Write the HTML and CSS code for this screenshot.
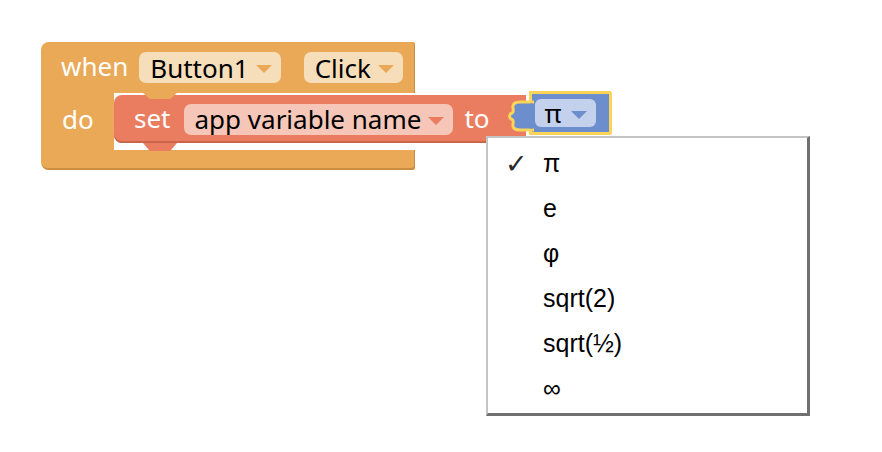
FILE: index.html
```html
<!DOCTYPE html>
<html lang="en">
<head>
  <meta charset="UTF-8">
  <title>Blocks</title>
  <link rel="stylesheet" href="styles.css">
</head>
<body>
  <div class="workspace">
    <div class="event-block">
      <div class="event-head">
        <span class="label">when</span>
        <span class="field field-orange first">Button1<i class="arrow"></i></span>
        <span class="field field-orange">Click<i class="arrow"></i></span>
      </div>
      <div class="event-body">
        <div class="do-col"><span class="label">do</span></div>
        <div class="slot">
          <div class="set-block">
            <span class="label">set</span>
            <span class="field field-salmon">app variable name<i class="arrow"></i></span>
            <span class="label to">to</span>
            <div class="math-block">
              <svg class="tab" width="26" height="36" viewBox="0 0 26 36">
                <path d="M26 4 H12 Q4 4 5 10 Q6 15 3 15.5 Q0 18 3 21 Q6 21.5 5 26 Q4 32 12 32 H26 Z" fill="#6c8ecc" stroke="#fcd45a" stroke-width="3"/>
                <rect x="22" y="5.5" width="6" height="25" fill="#6c8ecc"/>
              </svg>
              <span class="field field-blue">π<i class="arrow"></i></span>
            </div>
          </div>
        </div>
      </div>
      <div class="event-foot"></div>
    </div>

    <ul class="menu">
      <li class="menu-item"><span class="check">✓</span>π</li>
      <li class="menu-item"><span class="check"></span>e</li>
      <li class="menu-item"><span class="check"></span>φ</li>
      <li class="menu-item"><span class="check"></span>sqrt(2)</li>
      <li class="menu-item"><span class="check"></span>sqrt(½)</li>
      <li class="menu-item"><span class="check"></span>∞</li>
    </ul>
  </div>
</body>
</html>
```

FILE: styles.css
```css
body {
  margin: 0;
  background: #fff;
  font-family: "Noto Sans", sans-serif;
}

.workspace {
  position: relative;
  width: 882px;
  height: 452px;
  padding: 42px 0 0 41px;
  box-sizing: border-box;
}

.event-block {
  display: flex;
  flex-direction: column;
  width: 374px;
}

.label {
  color: #fff;
  font-size: 26px;
  line-height: 1;
  white-space: nowrap;
}

/* head row: when [Button1] [Click] */
.event-head {
  display: flex;
  align-items: center;
  height: 51px;
  padding-left: 20px;
  background: #e9a956;
  border-radius: 8px 3px 0 0;
  box-shadow: inset -1px 0 0 #c98e42;
}

.event-head .label {
  margin-top: -3px;
}

.field {
  display: inline-flex;
  flex-shrink: 0;
  align-items: center;
  height: 31px;
  padding: 0 9px 0 11px;
  border-radius: 7px;
  color: #000;
  font-size: 26px;
  line-height: 1;
  white-space: nowrap;
  box-sizing: border-box;
}

.field .arrow {
  width: 0;
  height: 0;
  margin: 3px 0 0 7px;
  border-left: 8.5px solid transparent;
  border-right: 8.5px solid transparent;
  border-top: 8px solid #e9a956;
}

.field-orange {
  background: #f7deba;
}

.field-orange.first {
  margin: 0 23px 0 11px;
}

.event-body {
  display: flex;
  height: 57px;
}

.do-col {
  flex-shrink: 0;
  width: 73px;
  padding: 13px 0 0 21px;
  background: #e9a956;
  box-sizing: border-box;
}

.slot {
  flex-shrink: 0;
  padding-top: 2px;
}

.event-foot {
  height: 20px;
  background: #e9a956;
  border-radius: 0 0 3px 8px;
  box-shadow: inset -1px -2px 0 #c98e42;
}

/* set [app variable name] to */
.set-block {
  position: relative;
  display: flex;
  align-items: center;
  height: 48px;
  padding-left: 20px;
  background: #ea7d60;
  border-radius: 8px 0 0 8px;
  box-shadow: inset 0 -2px 0 #cc6549;
  box-sizing: border-box;
}

.set-block::before {
  content: "";
  position: absolute;
  left: 29px;
  top: -2px;
  width: 34px;
  height: 6px;
  background: #e9a956;
  clip-path: polygon(0 0, 100% 0, 80% 100%, 20% 100%);
}

.set-block::after {
  content: "";
  position: absolute;
  left: 29px;
  bottom: -8px;
  width: 34px;
  height: 8px;
  background: #ea7d60;
  clip-path: polygon(0 0, 100% 0, 80% 100%, 20% 100%);
}

.set-block .label {
  margin-top: -3px;
}

.field-salmon {
  margin-left: 13px;
  background: #f6c7b8;
}

.field-salmon .arrow {
  border-top-color: #ea7d60;
}

.set-block .to {
  margin-left: 11px;
}

/* selected math constant block */
.math-block {
  position: relative;
  flex-shrink: 0;
  align-self: flex-start;
  display: flex;
  align-items: center;
  width: 82px;
  height: 44px;
  margin: -4px -86px 0 40px;
  padding-left: 5px;
  background: #6c8ecc;
  border: 3px solid #fcd45a;
  border-left-width: 0;
  border-radius: 0 3px 3px 0;
  box-sizing: border-box;
}

.math-block::before {
  content: "";
  position: absolute;
  left: -1px;
  top: -3px;
  width: 3px;
  height: 11px;
  background: #fcd45a;
}

.math-block::after {
  content: "";
  position: absolute;
  left: -1px;
  bottom: -3px;
  width: 3px;
  height: 6px;
  background: #fcd45a;
}

.math-block .tab {
  position: absolute;
  left: -22px;
  top: 4px;
}

.field-blue {
  height: 28px;
  padding-left: 10px;
  background: #c4d1ec;
  border-radius: 6px;
}

.field-blue .arrow {
  margin-left: 9px;
  border-top-color: #6c8ecc;
}

/* dropdown menu */
.menu {
  position: absolute;
  left: 486px;
  top: 136px;
  width: 324px;
  height: 280px;
  margin: 0;
  padding: 3px 0 0;
  list-style: none;
  background: #fff;
  border-left: 2px solid #c4c4c4;
  border-top: 2px solid #c4c4c4;
  border-right: 3px solid #707070;
  border-bottom: 3px solid #707070;
  box-sizing: border-box;
  font-family: "Liberation Sans", Arial, sans-serif;
  font-size: 25px;
  color: #000;
}

.menu-item {
  display: flex;
  align-items: center;
  height: 45px;
}

.check {
  width: 38px;
  margin-left: 17px;
  font-family: "DejaVu Sans", sans-serif;
  font-size: 27px;
  color: #2a2a2a;
}
```
